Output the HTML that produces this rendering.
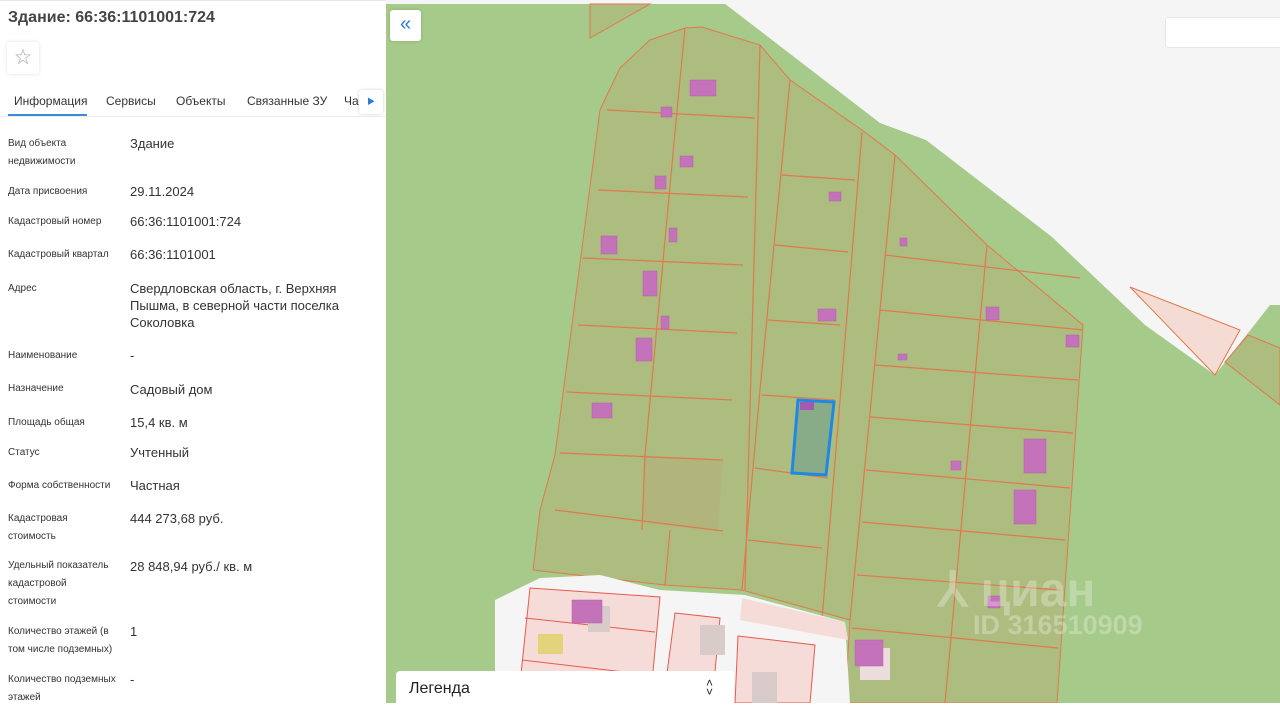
<!DOCTYPE html>
<html style="background:#fff"><head><meta charset="utf-8">
<style>
*{margin:0;padding:0;box-sizing:border-box}
body{width:1280px;height:703px;overflow:hidden;position:relative;font-family:"Liberation Sans","Noto Sans CJK SC",sans-serif;background:#fff}
#map{position:absolute;left:0;top:0}
#panel{position:absolute;left:0;top:0;width:386px;height:703px;background:#fff;border-top:1px solid #e6e6e6}
.t{position:absolute;left:8px;top:8px;font-size:16px;color:#444;font-weight:bold}
.star{position:absolute;left:7px;top:41px;width:32px;height:32px;border-radius:3px;box-shadow:0 0 4px rgba(0,0,0,.12);color:#aaa;font-size:17px;text-align:center;line-height:32px}
.tabs{position:absolute;left:0;top:88px;width:386px;height:28px;border-bottom:1px solid #eee;font-size:12px;color:#333}
.tabs span{position:absolute;top:5px}
.ul{position:absolute;left:8px;top:25px;width:79px;height:2px;background:#3a8bd9}
.arr{position:absolute;left:359px;top:89px;width:24px;height:24px;background:#fff;border-radius:3px;box-shadow:0 0 3px rgba(0,0,0,.2);color:#2b7cd3;font-size:8px;text-align:center;line-height:24px}
.l{position:absolute;left:8px;font-size:10px;line-height:18px;color:#333}
.v{position:absolute;left:130px;font-size:13px;line-height:17px;color:#333}
.back{position:absolute;left:390px;top:10px;width:31px;height:31px;background:#fff;border-radius:3px;color:#2b7cd3;font-size:20px;text-align:center;line-height:29px;box-shadow:0 0 3px rgba(0,0,0,.15)}
.search{position:absolute;left:1165px;top:17px;width:120px;height:31px;background:#fff;border:1px solid #e4e8ee;border-radius:3px}
.leg{position:absolute;left:396px;top:671px;width:338px;height:40px;background:#fff;border-radius:4px;font-size:16px;color:#222}
.wm{position:absolute;font-family:"Liberation Sans",sans-serif;color:rgba(255,255,255,.28);font-weight:bold}
</style></head><body>
<svg id="map" width="1280" height="703" viewBox="0 0 1280 703">
<rect x="386" y="0" width="894" height="703" fill="#a6ca89"/>
<rect x="386" y="0" width="894" height="4" fill="#f5f5f6"/>
<polygon points="720,0 1280,0 1280,305 1270,305 1215,375 1145,325 1052,237 926,140 880,123" fill="#f5f5f6"/>
<polygon points="590,4 650,4 590,38" fill="#adbd80" stroke="#e2784d" stroke-width="1"/>
<polygon points="1130,287 1240,330 1215,375" fill="#f4dcd4" stroke="#e2784d" stroke-width="1"/>
<polygon points="1248,335 1280,348 1280,405 1225,362" fill="#adbd80" stroke="#e2784d" stroke-width="1"/>
<polygon points="607,95 620,68 650,40 685,28 702,27 760,45 790,80 862,130 895,155 987,245 1083,325 1057,703 845,703 850,620 742,590 665,585 533,570 540,510 555,455 600,110" fill="#adbd80" stroke="#e2784d" stroke-width="1"/>
<polygon points="643,455 723,460 718,531 643,523" fill="#b1b57c"/>
<g stroke="#e2784d" stroke-width="1.2" fill="none">
<path d="M685,28 L678,100 L645,455 L642,530"/>
<path d="M760,45 L745,590"/>
<path d="M790,80 L760,390 L742,590"/>
<path d="M862,132 L822,620"/>
<path d="M895,155 L850,620"/>
<path d="M987,245 L945,703"/>
<path d="M607,110 L755,118"/>
<path d="M598,190 L748,197"/>
<path d="M583,258 L743,265"/>
<path d="M578,325 L737,333"/>
<path d="M567,392 L732,400"/>
<path d="M560,453 L723,460"/>
<path d="M555,510 L723,531"/>
<path d="M665,585 L670,530"/>
<path d="M781,175 L855,180"/>
<path d="M775,245 L848,252"/>
<path d="M768,320 L840,325"/>
<path d="M762,395 L835,400"/>
<path d="M755,468 L828,478"/>
<path d="M748,540 L822,548"/>
<path d="M885,255 L1080,278"/>
<path d="M880,310 L1083,330"/>
<path d="M875,365 L1078,380"/>
<path d="M870,417 L1073,433"/>
<path d="M866,470 L1070,488"/>
<path d="M862,522 L1065,540"/>
<path d="M857,575 L1060,590"/>
<path d="M852,628 L1058,648"/>
</g>
<polygon points="495,600 540,578 600,575 660,590 745,595 845,622 850,703 495,703" fill="#f5f5f6"/>
<g fill="#f6dcd8" stroke="#e85a50" stroke-width="1">
<polygon points="530,588 660,597 650,703 518,703"/>
<polygon points="675,613 720,618 712,703 663,703"/>
<polygon points="738,636 815,645 810,703 735,703"/>
<polygon points="742,598 845,622 848,640 740,620" stroke="none"/>
</g>
<g stroke="#e85a50" stroke-width="1"><path d="M525,618 L655,632"/><path d="M522,660 L650,675"/></g>
<rect x="538" y="634" width="25" height="20" fill="#e4d37a"/>
<rect x="588" y="606" width="22" height="26" fill="#d9cbca"/>
<rect x="700" y="625" width="25" height="30" fill="#d9cbca"/>
<rect x="752" y="672" width="25" height="31" fill="#d9cbca"/>
<rect x="860" y="648" width="30" height="32" fill="#ecdcdc"/>
<g fill="#c472b9" stroke="#b060a8" stroke-width="0.5">
<rect x="690" y="80" width="26" height="16"/><rect x="661" y="107" width="11" height="10"/>
<rect x="680" y="156" width="13" height="11"/><rect x="655" y="176" width="11" height="13"/>
<rect x="669" y="228" width="8" height="14"/><rect x="601" y="236" width="16" height="18"/>
<rect x="643" y="271" width="14" height="25"/><rect x="661" y="316" width="8" height="13"/>
<rect x="636" y="338" width="16" height="23"/><rect x="592" y="403" width="20" height="15"/>
<rect x="829" y="192" width="12" height="9"/><rect x="818" y="309" width="18" height="12"/>
<rect x="900" y="238" width="7" height="8"/><rect x="986" y="307" width="13" height="13"/>
<rect x="1066" y="335" width="13" height="12"/><rect x="898" y="354" width="9" height="6"/>
<rect x="951" y="461" width="10" height="9"/><rect x="1024" y="439" width="22" height="34"/>
<rect x="1014" y="490" width="22" height="34"/><rect x="988" y="596" width="12" height="12"/>
<rect x="572" y="600" width="30" height="23"/><rect x="855" y="640" width="28" height="26"/>
</g>
<polygon points="798,400 834,402 826,475 792,473" fill="#7fa88a" fill-opacity="0.8" stroke="#1e88e5" stroke-width="3"/>
<rect x="800" y="402" width="14" height="8" fill="#a45ab0"/>
</svg>
<div class="wm" style="left:938px;top:562px;font-size:48px">⅄ циан</div>
<div class="wm" style="left:973px;top:610px;font-size:27px">ID 316510909</div>
<div class="back">«</div>
<div class="search"></div>
<div class="leg"><span style="position:absolute;left:13px;top:9px">Легенда</span><span style="position:absolute;left:310px;top:8px;font-size:12px;line-height:9px;text-align:center">˄<br>˅</span></div>
<div id="panel">
<div class="t">Здание: 66:36:1101001:724</div>
<div class="star">☆</div>
<div class="tabs"><span style="left:14px">Информация</span><span style="left:106px">Сервисы</span><span style="left:176px">Объекты</span><span style="left:247px">Связанные ЗУ</span><span style="left:344px">Ча</span><div class="ul"></div></div>
<div class="arr">▶</div>
<div class="l" style="top:134px">Вид объекта<br>недвижимости</div><div class="v" style="top:134px">Здание</div>
<div class="l" style="top:182px">Дата присвоения</div><div class="v" style="top:182px">29.11.2024</div>
<div class="l" style="top:212px">Кадастровый номер</div><div class="v" style="top:212px">66:36:1101001:724</div>
<div class="l" style="top:245px">Кадастровый квартал</div><div class="v" style="top:245px">66:36:1101001</div>
<div class="l" style="top:279px">Адрес</div><div class="v" style="top:279px">Свердловская область, г. Верхняя<br>Пышма, в северной части поселка<br>Соколовка</div>
<div class="l" style="top:346px">Наименование</div><div class="v" style="top:346px">-</div>
<div class="l" style="top:379px">Назначение</div><div class="v" style="top:380px">Садовый дом</div>
<div class="l" style="top:413px">Площадь общая</div><div class="v" style="top:413px">15,4 кв. м</div>
<div class="l" style="top:443px">Статус</div><div class="v" style="top:443px">Учтенный</div>
<div class="l" style="top:476px">Форма собственности</div><div class="v" style="top:476px">Частная</div>
<div class="l" style="top:509px">Кадастровая<br>стоимость</div><div class="v" style="top:509px">444 273,68 руб.</div>
<div class="l" style="top:556px">Удельный показатель<br>кадастровой<br>стоимости</div><div class="v" style="top:557px">28 848,94 руб./ кв. м</div>
<div class="l" style="top:622px">Количество этажей (в<br>том числе подземных)</div><div class="v" style="top:622px">1</div>
<div class="l" style="top:670px">Количество подземных<br>этажей</div><div class="v" style="top:670px">-</div>
</div>
</body></html>
